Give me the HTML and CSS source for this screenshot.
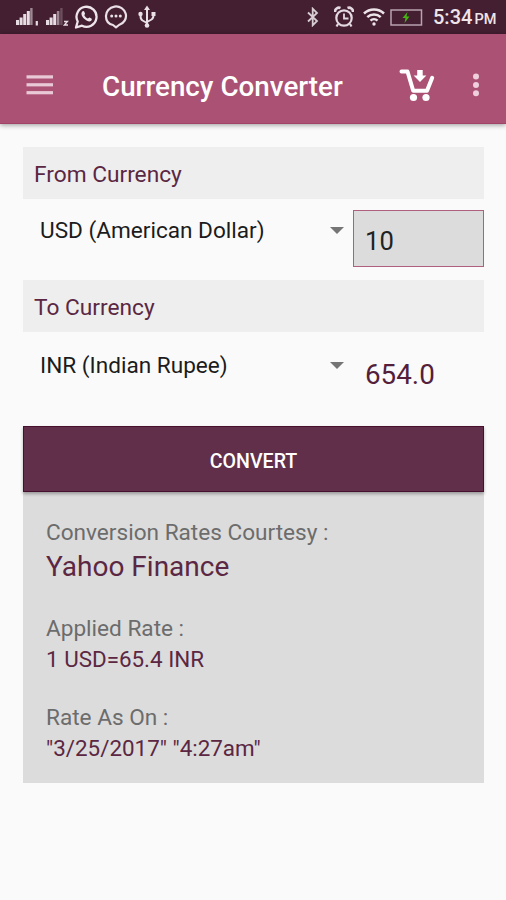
FILE: index.html
```html
<!DOCTYPE html>
<html lang="en">
<head>
  <meta charset="UTF-8" />
  <meta name="viewport" content="width=device-width, initial-scale=1.0"/>
  <title>Currency Converter</title>
  <link rel="stylesheet" href="styles.css">
</head>
<body>
  <div class="status-bar">
    <div class="status-left">
      <svg class="signal" width="24" height="20" viewBox="0 0 24 20" fill="#e6dce2">
        <rect x="0" y="13" width="3" height="5"/>
        <rect x="3.6" y="10.500" width="3" height="7.500"/>
        <rect x="7.2" y="7" width="3" height="11"/>
        <rect x="10.8" y="4" width="3" height="14"/>
        <rect x="14.2" y="1" width="2.4" height="17" opacity=".55"/>
        <rect x="19.700" y="14" width="2.200" height="4.500"/>
      </svg>
      <svg class="signal-two" width="24" height="20" viewBox="0 0 24 20" fill="#e6dce2">
        <rect x="0" y="13" width="3" height="5"/>
        <rect x="3.6" y="10.500" width="3" height="7.500"/>
        <rect x="7.2" y="7" width="3" height="11"/>
        <rect x="10.8" y="4" width="2.6" height="14" opacity=".55"/>
        <rect x="14.2" y="1" width="2.4" height="17" opacity=".25"/>
        <path d="M18 14.500h3.400l-3 3.500h3.600" fill="none" stroke="#e6dce2" stroke-width="1.400"/>
      </svg>
      <svg class="whatsapp" width="24" height="26" viewBox="0 0 24 26">
        <path d="M2 23.5l1.7-6A10 10 0 1 1 8 21.7z" fill="none" stroke="#eee5ea" stroke-width="2.3" stroke-linejoin="round"/>
        <path d="M8.4 7.4c.7-.7 1.6-.5 1.9.3l.7 1.8c.2.6-.8 1.3-.7 1.8.8 1.6 1.9 2.6 3.5 3.3.6.1 1.2-1.2 1.8-1l1.8.9c.8.5.4 2-.6 2.6-1.5.9-4 .1-6.3-2-2.5-2.3-4.2-5.9-2.1-7.7z" fill="#eee5ea"/>
      </svg>
      <svg class="chat" width="24" height="24" viewBox="0 0 24 24">
        <path d="M9 20C4.500 19 2 15.500 2 11.500A10 9.500 0 1 1 15 20L12 22.300z" fill="none" stroke="#e9dfe5" stroke-width="2.200" stroke-linejoin="round"/>
        <g fill="#e9dfe5"><circle cx="7.7" cy="11" r="1.500"/><circle cx="12" cy="11" r="1.500"/><circle cx="16.3" cy="11" r="1.500"/></g>
      </svg>
      <svg class="usb" width="18" height="24" viewBox="0 0 18 24" stroke="#e9dfe5" stroke-width="2" fill="none">
        <path d="M9 4v16M9 18l-4.500-2.500c-1.500-.8-2-1.500-2-5M9 17l4.500-2.500c1.500-.8 2-1.500 2-5"/>
        <path d="M9 .5l3 4.500H6z" fill="#e9dfe5" stroke="none"/>
        <circle cx="9" cy="20.500" r="2.300" fill="#e9dfe5" stroke="none"/>
        <circle cx="2.500" cy="9" r="2.200" fill="#e9dfe5" stroke="none"/>
        <path d="M13.500 7h4v4h-4z" fill="#e9dfe5" stroke="none"/>
      </svg>
    </div>
    <div class="status-right">
      <svg class="bluetooth" width="12" height="20" viewBox="0 0 12 20" fill="none" stroke="#d9cdd4" stroke-width="1.8">
        <path d="M1 5.500l9 8.500-4.300 4.300V1.700L10 6l-9 8.500"/>
      </svg>
      <svg class="alarm" width="20" height="22" viewBox="0 0 20 22" fill="none" stroke="#e4d9e0" stroke-width="2.200">
        <circle cx="10" cy="12" r="7.700"/>
        <path d="M10 7.500v5h4.500" stroke-width="1.800"/>
        <path d="M1 6a4 4 0 0 1 5.500-4M19 6a4 4 0 0 0-5.500-4" stroke-width="2.600"/>
        <path d="M4 18l-1.500 2.500M16 18l1.500 2.500"/>
      </svg>
      <svg class="wifi" width="22" height="18" viewBox="0 0 22 18" fill="none" stroke="#eee5ea" stroke-width="2.500">
        <path d="M1 5.500a14.500 14.500 0 0 1 20 0M4.300 9.200a9.700 9.700 0 0 1 13.400 0M7.500 12.700a5 5 0 0 1 7 0"/>
        <circle cx="11" cy="16" r="1.700" fill="#eee5ea" stroke="none"/>
      </svg>
      <svg class="battery" width="33" height="17" viewBox="0 0 33 17">
        <path d="M1 1h30.500v15H1z" fill="none" stroke="#b9a3b0" stroke-width="1.500"/>
        <path d="M17.500 3l-5 6h3l-1 5 5-6.500h-3z" fill="#45b510"/>
      </svg>
      <div class="clock">5:34<span class="meridiem">PM</span></div>
    </div>
  </div>

  <div class="app-bar">
    <svg class="menu-icon" width="28" height="20" viewBox="0 0 28 20" fill="#e9c9d6">
      <rect x="0.5" y="0.3" width="26.500" height="3.200"/>
      <rect x="0.5" y="8.2" width="26.500" height="3.200"/>
      <rect x="0.5" y="16.1" width="26.500" height="3.200"/>
    </svg>
    <h1>Currency Converter</h1>
    <svg class="cart-icon" width="36" height="34" viewBox="0 0 36 34">
      <path d="M2.500 3.500h6l5.700 19.300h13.800l5.200-13" fill="none" stroke="#fff" stroke-width="4" stroke-linecap="round" stroke-linejoin="round"/>
      <path d="M18.200 2h5.500v5.500h3.700l-6.400 6.500-6.400-6.500h3.600z" fill="#fff"/>
      <circle cx="14.500" cy="29.500" r="3.600" fill="#fff"/>
      <circle cx="27" cy="29.500" r="3.600" fill="#fff"/>
    </svg>
    <svg class="more-icon" width="8" height="24" viewBox="0 0 8 24" fill="#f0cfdc">
      <circle cx="4" cy="3.500" r="3"/>
      <circle cx="4" cy="12" r="3"/>
      <circle cx="4" cy="20.300" r="3"/>
    </svg>
  </div>

  <div class="content">
    <div class="section-label">From Currency</div>
    <div class="currency-row">
      <div class="spinner">
        <span class="from-name">USD (American Dollar)</span>
        <span class="arrow"></span>
      </div>
      <div class="amount">10</div>
    </div>

    <div class="section-label">To Currency</div>
    <div class="currency-row to-row">
      <div class="spinner">
        <span class="to-name">INR (Indian Rupee)</span>
        <span class="arrow"></span>
      </div>
      <div class="result">654.0</div>
    </div>

    <button class="convert">CONVERT</button>

    <div class="rates">
      <p class="caption">Conversion Rates Courtesy :</p>
      <p class="source">Yahoo Finance</p>
      <p class="caption">Applied Rate :</p>
      <p class="value applied">1 USD=65.4 INR</p>
      <p class="caption">Rate As On :</p>
      <p class="value date">"3/25/2017" "4:27am"</p>
    </div>
  </div>
</body>
</html>
```
FILE: styles.css
```css
* {
  box-sizing: border-box;
}

html, body {
  height: 100%;
  margin: 0;
  font-family: Roboto, "Liberation Sans", sans-serif;
  background: #fafafa;
  overflow: hidden;
}

svg {
  display: block;
  flex: none;
}

.status-bar {
  height: 34px;
  display: flex;
  justify-content: space-between;
  background: #431f31;
}

.status-left {
  display: flex;
  align-items: center;
  padding-left: 16px;
}

.signal, .signal-two {
  margin-right: 6px;
}

.signal-two {
  margin-right: 4px;
}

.whatsapp {
  margin-right: 6px;
}

.chat {
  margin-right: 10px;
}

.status-right {
  display: flex;
  align-items: center;
  padding-right: 10px;
}

.bluetooth {
  margin-right: 15px;
}

.alarm {
  margin-right: 9px;
}

.wifi {
  margin-right: 5px;
}

.battery {
  margin-right: 10px;
}

.clock {
  width: 63px;
  padding-top: 3px;
  font-size: 20px;
  line-height: 24px;
  font-weight: 500;
  white-space: nowrap;
  color: #eee5ea;
}

.meridiem {
  margin-left: 2px;
  font-size: 14.5px;
}

.app-bar {
  height: 90px;
  display: flex;
  align-items: center;
  padding: 12px 26px 0;
  background: #ab5174;
  border-bottom: 1px solid #a04467;
  box-shadow: 0 1px 5px rgba(0,0,0,0.4);
}

h1 {
  flex: 1;
  margin: 0 0 0 48px;
  padding-top: 4px;
  font-size: 27.8px;
  line-height: 32px;
  font-weight: 500;
  color: #fff;
  white-space: nowrap;
}

.cart-icon {
  margin-right: 37px;
}

.content {
  padding: 23px 22px 0 23px;
}

.section-label {
  height: 52px;
  padding: 1px 11px 0;
  font-size: 22.7px;
  line-height: 53px;
  color: #5b2742;
  background: #eee;
}

.currency-row {
  height: 81px;
  display: flex;
  align-items: flex-start;
  padding-top: 11px;
}

.spinner {
  width: 330px;
  height: 40px;
  display: flex;
  align-items: center;
  justify-content: space-between;
  padding: 0 9px 0 17px;
  font-size: 22.6px;
  color: #1c1c1c;
}

.arrow {
  border-left: 7px solid transparent;
  border-right: 7px solid transparent;
  border-top: 7px solid #757575;
}

.amount {
  width: 131px;
  height: 57px;
  padding: 2px 0 0 11px;
  border: 1px solid #b0607f;
  font-size: 25.6px;
  line-height: 56px;
  color: #222;
  background: #dcdcdc;
}

.to-row {
  height: 94px;
  padding-top: 13px;
}

.result {
  padding: 12px 0 0 12px;
  font-size: 27.8px;
  line-height: 36px;
  color: #551f3c;
}

.convert {
  display: block;
  position: relative;
  width: 100%;
  height: 66px;
  padding: 4px 0 0;
  border: 1px solid #48102f;
  font-family: inherit;
  font-size: 19.6px;
  font-weight: 500;
  color: #fff;
  background: #612f4a;
  box-shadow: 0 2px 3px rgba(0,0,0,0.3);
}

.rates {
  height: 291px;
  padding: 26px 23px 0;
  background: #dcdcdc;
}

.rates p {
  margin: 0;
  font-size: 22.6px;
  line-height: 30px;
  color: #5b2742;
  white-space: nowrap;
}

.rates .caption {
  color: #6c6c6c;
}

.rates .source {
  margin-bottom: 28px;
  font-size: 28px;
  line-height: 38px;
}

.rates .value {
  font-size: 22.4px;
}

.rates .applied {
  margin-bottom: 29px;
}
```
